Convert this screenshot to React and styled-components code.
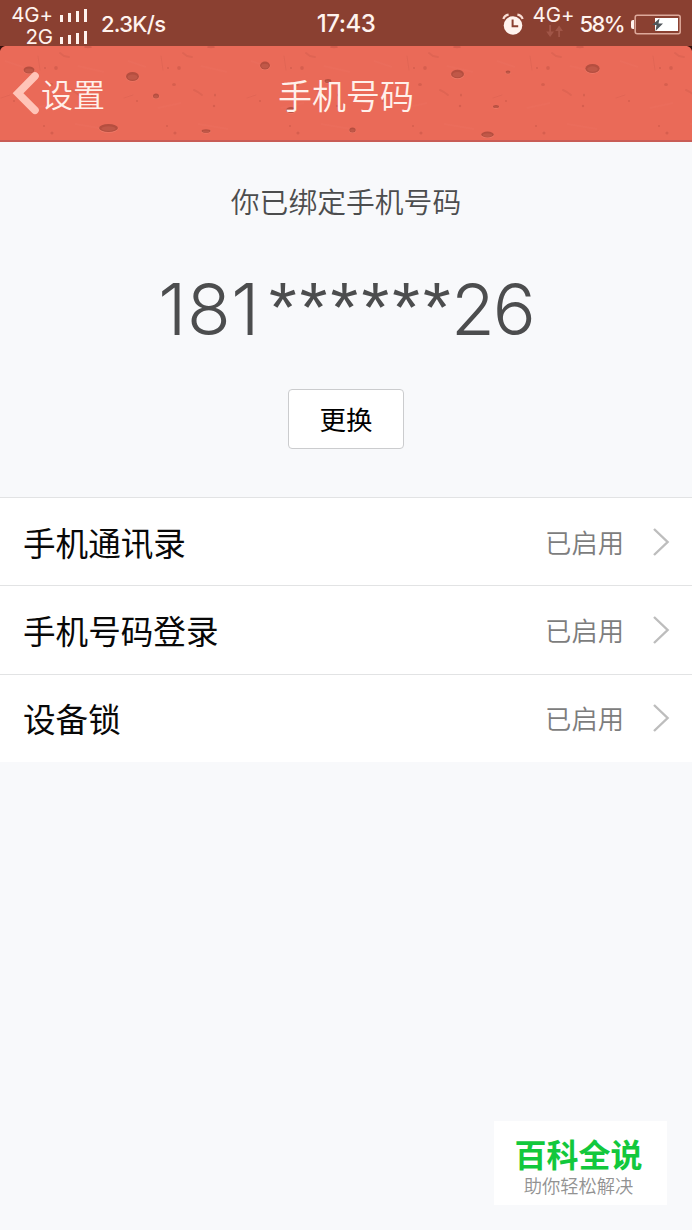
import React from 'react';
import styled, { createGlobalStyle } from 'styled-components';

const GlobalStyle = createGlobalStyle`
  * {
    box-sizing: border-box;
  }
  body {
    margin: 0;
    background-color: #f8f9fb;
    font-family: Inter, 'Noto Sans CJK SC', sans-serif;
  }
`;

const Page = styled.div`
  position: relative;
  display: flex;
  flex-direction: column;
  width: 692px;
  height: 1230px;
  overflow: hidden;
  background-color: #f8f9fb;
`;

const StatusBar = styled.div`
  display: grid;
  grid-template-columns: 1fr auto 1fr;
  height: 46px;
  background-color: #8a4031;
  color: #fff3ee;
`;

const StatusLeft = styled.div`
  display: flex;
  align-items: center;
  padding-left: 11px;
`;

const StatusRight = styled.div`
  display: flex;
  align-items: center;
  justify-content: flex-end;
  padding-right: 11px;
`;

const StatusText = styled.span`
  font-size: ${(props) => props.$size || 22}px;
  line-height: 46px;
  padding-top: ${(props) => props.$top || 0}px;
  letter-spacing: ${(props) => props.$spacing || 0}px;
  margin-left: ${(props) => props.$left || 0}px;
  font-weight: 450;
`;

const Battery = styled.div`
  display: flex;
  margin-left: 6px;
`;

const Networks = styled.div`
  display: flex;
  flex-direction: column;
  align-items: flex-end;
  width: 76px;
  padding-top: 4px;
`;

const Network = styled.div`
  display: flex;
  align-items: center;
  gap: 7px;
  height: 22px;
  font-size: 20.5px;
  line-height: 18px;
  letter-spacing: -0.1px;
`;

const Mobile = styled.div`
  display: flex;
  flex-direction: column;
  align-items: center;
  width: 42px;
  height: 46px;
  padding-top: 4px;
  margin-left: 9px;
  font-size: 20.5px;
  line-height: 20px;
  letter-spacing: -0.1px;
`;

const Header = styled.div`
  position: relative;
  height: 96px;
  background-color: #ea6a58;
  border-bottom: 2px solid #c95d56;
`;

const Texture = styled.svg`
  position: absolute;
  top: 0;
  left: 0;
`;

const HeaderContent = styled.div`
  position: relative;
  display: grid;
  grid-template-columns: 1fr auto 1fr;
  align-items: center;
  height: 94px;
  color: #fff0ea;
`;

const BackButton = styled.div`
  display: flex;
  align-items: center;
  padding-left: 12px;
  font-size: 32px;
  line-height: 48px;
  font-weight: 350;
`;

const BackLabel = styled.span`
  padding-top: 5px;
  margin-left: 1px;
`;

const Title = styled.h1`
  margin: 0;
  padding-top: 7px;
  font-size: 34px;
  line-height: 50px;
  font-weight: 350;
`;

const Hero = styled.div`
  display: flex;
  flex-direction: column;
  align-items: center;
  height: 355px;
  color: #4c4d4e;
`;

const Hint = styled.p`
  margin: 40px 0 0;
  font-size: 28.8px;
  line-height: 42px;
  font-weight: 350;
`;

const PhoneNumber = styled.div`
  margin-top: 42px;
  height: 86px;
  font-size: 71.5px;
  line-height: 86px;
  font-weight: 340;
  white-space: nowrap;
`;

const Digits = styled.span`
  letter-spacing: ${(props) => props.$spacing}px;
`;

const Masked = styled.span`
  margin: 0 -3px 0 9px;
  font-family: 'Liberation Sans', sans-serif;
  font-size: 71px;
  line-height: 1;
  letter-spacing: 3.2px;
  vertical-align: 3px;
`;

const ChangeButton = styled.button`
  width: 116px;
  height: 60px;
  margin-top: 37px;
  padding: 2px 0 0;
  border: 1px solid #cbccce;
  border-radius: 4px;
  background-color: #fff;
  color: #000;
  font-family: inherit;
  font-size: 26.5px;
  line-height: 56px;
`;

const List = styled.div`
  display: flex;
  flex-direction: column;
  height: 265px;
  background-color: #fff;
`;

const Row = styled.div`
  flex: 1;
  display: flex;
  align-items: center;
  padding: 0 22px 0 23px;
  border-top: 1px solid #e2e3e4;
`;

const RowLabel = styled.span`
  flex: 1;
  padding-top: 4px;
  color: #080808;
  font-size: 32.6px;
  line-height: 48px;
`;

const RowValue = styled.span`
  margin-right: 28px;
  padding-top: 4px;
  color: #7d7d7d;
  font-size: 26.3px;
  line-height: 40px;
  font-weight: 350;
`;

const Watermark = styled.div`
  position: absolute;
  left: 494px;
  top: 1121px;
  display: flex;
  flex-direction: column;
  align-items: center;
  width: 173px;
  height: 84px;
  padding-top: 15px;
  background-color: #fff;
`;

const WatermarkTitle = styled.span`
  color: #12c83c;
  font-size: 32px;
  line-height: 40px;
  font-weight: 700;
  padding-right: 4px;
`;

const WatermarkText = styled.span`
  color: #929292;
  font-size: 18.3px;
  line-height: 20px;
  font-weight: 350;
  padding-right: 4px;
`;

const rows = [
  { label: '手机通讯录', value: '已启用' },
  { label: '手机号码登录', value: '已启用' },
  { label: '设备锁', value: '已启用' },
];

// cx, cy, rx, ry relative to the header
const holes = [
  [29, 24, 5.5, 3.5],
  [132.5, 30.5, 6.5, 4.5],
  [156, 50, 3, 2.5],
  [108.5, 82, 9.5, 4],
  [206, 85, 4.5, 1.8],
  [265, 19.5, 5, 4],
  [328, 35, 3.5, 2],
  [291, 64, 5, 3],
  [352.5, 84, 3.2, 2.5],
  [457.5, 28, 6.5, 4.3],
  [508, 26, 2.5, 1.6],
  [592.5, 22.5, 7.2, 4.6],
  [496, 60.5, 3, 1.6],
  [487.5, 88.5, 6.3, 3],
];

function Signal() {
  return (
    <svg width="27" height="15" viewBox="0 0 27 15" fill="#fff3ee">
      <rect x="0" y="7" width="3" height="7" />
      <rect x="8" y="5" width="3" height="9" />
      <rect x="16" y="3" width="3" height="11" />
      <rect x="24" y="1" width="3" height="13" />
    </svg>
  );
}

function AlarmIcon() {
  return (
    <svg width="22" height="24" viewBox="0 0 22 24">
      <circle cx="11" cy="13.5" r="9.3" fill="#fff3ee" />
      <path d="M1.4 7C2 4.6 4 3 6.6 2.6M20.6 7C20 4.6 18 3 15.4 2.6" fill="none" stroke="#f8ddd4" strokeWidth="2.2" />
      <path d="M10.6 7.5v6.8h5.6" fill="none" stroke="#8a4031" strokeWidth="2" />
    </svg>
  );
}

function DataArrows() {
  return (
    <svg width="18" height="13" viewBox="0 0 18 13" fill="#a05547">
      <path d="M4.2 0h1.8v6.5h3L5.1 12 1.2 6.5h3zM13.2 12H15V6h3L14.1.5 10.2 6h3z" />
    </svg>
  );
}

function BatteryIcon() {
  return (
    <svg width="51" height="21" viewBox="0 0 51 21">
      <path d="M4 6H3Q1 6 1 8v5q0 2 2 2h1z" fill="#fff3ee" />
      <rect x="5.2" y="1.2" width="45" height="18.6" rx="2" fill="none" stroke="#dda99b" strokeWidth="1.5" />
      <path d="M25 4h23v13H25z" fill="#fff" />
      <path d="M29.5 4.5L22 11h4.5L25.5 17l7.5-7.5h-4.5z" fill="#50565a" />
    </svg>
  );
}

function HeaderTexture() {
  return (
    <Texture width="692" height="96" viewBox="0 0 692 96">
      <defs>
        <pattern id="grain" width="123" height="96" patternUnits="userSpaceOnUse">
          <g fill="#ca5747" opacity="0.6">
            <circle cx="56" cy="22" r="1.9" />
            <circle cx="45" cy="22" r="1.1" />
            <ellipse cx="51" cy="38.5" rx="2" ry="1.5" />
            <ellipse cx="92" cy="49" rx="1" ry="1.5" />
            <circle cx="91" cy="60" r="1.3" />
            <circle cx="52" cy="87" r="1.6" />
            <circle cx="44" cy="80" r="1" />
            <ellipse cx="88" cy="1" rx="4" ry="1.2" />
            <circle cx="14" cy="55" r="1" />
          </g>
          <g fill="none" stroke="#d45d4d" opacity="0.5" strokeLinecap="round">
            <path d="M60 7l4 3 5 1M71 44l4 2 4 3" strokeWidth="2" />
            <path d="M38 10l2 14M1 52l9-3" strokeWidth="0.8" />
          </g>
          <path d="M5 15l18 6M35 62l23-5M75 78l30 5M78 20l26 6" stroke="#f0796a" strokeWidth="1.5" opacity="0.15" />
        </pattern>
      </defs>
      <rect width="692" height="96" fill="url(#grain)" />
      {holes.map(([cx, cy, rx, ry]) => (
        <g key={cx}>
          <ellipse cx={cx} cy={cy + 0.6} rx={rx + 0.3} ry={ry} fill="#ef7d6b" />
          <ellipse cx={cx} cy={cy} rx={rx} ry={ry} fill="#b54e3f" />
          <ellipse cx={cx} cy={cy + 0.6} rx={rx * 0.75} ry={ry * 0.6} fill="#c05848" />
        </g>
      ))}
      <path d="M0 0h5Q1 1 0 5zM692 0h-5q4 1 5 5z" fill="#38100c" />
    </Texture>
  );
}

function BackIcon() {
  return (
    <svg width="28" height="44" viewBox="0 0 28 44" fill="none" stroke="#ffc4b8" strokeWidth="7.6" strokeLinecap="round" strokeLinejoin="miter">
      <path d="M23 5L6 22.3 23 39.2" />
    </svg>
  );
}

function Chevron() {
  return (
    <svg width="18" height="30" viewBox="0 0 18 30" fill="none" stroke="#bdbdbd" strokeWidth="2.4">
      <path d="M2 2l13.6 13L2 28" />
    </svg>
  );
}

export default function App() {
  return (
    <Page>
      <GlobalStyle />
      <StatusBar>
        <StatusLeft>
          <Networks>
            <Network>4G+<Signal /></Network>
            <Network>2G<Signal /></Network>
          </Networks>
          <StatusText $left={14} $size={22} $spacing={-0.7}>2.3K/s</StatusText>
        </StatusLeft>
        <StatusText $size={24} $spacing={-0.5} $top={1}>17:43</StatusText>
        <StatusRight>
          <AlarmIcon />
          <Mobile>
            4G+
            <DataArrows />
          </Mobile>
          <StatusText $left={5} $size={22} $spacing={-1.6}>58%</StatusText>
          <Battery><BatteryIcon /></Battery>
        </StatusRight>
      </StatusBar>
      <Header>
        <HeaderTexture />
        <HeaderContent>
          <BackButton>
            <BackIcon />
            <BackLabel>设置</BackLabel>
          </BackButton>
          <Title>手机号码</Title>
        </HeaderContent>
      </Header>
      <Hero>
        <Hint>你已绑定手机号码</Hint>
        <PhoneNumber>
          <Digits $spacing={0.6}>181</Digits>
          <Masked>******</Masked>
          <Digits $spacing={-2}>26</Digits>
        </PhoneNumber>
        <ChangeButton>更换</ChangeButton>
      </Hero>
      <List>
        {rows.map((row) => (
          <Row key={row.label}>
            <RowLabel>{row.label}</RowLabel>
            <RowValue>{row.value}</RowValue>
            <Chevron />
          </Row>
        ))}
      </List>
      <Watermark>
        <WatermarkTitle>百科全说</WatermarkTitle>
        <WatermarkText>助你轻松解决</WatermarkText>
      </Watermark>
    </Page>
  );
}
